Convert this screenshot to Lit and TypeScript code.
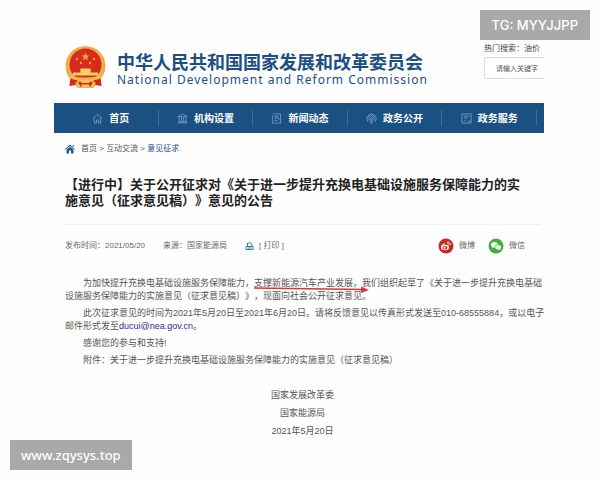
import { LitElement, html, css, svg } from "lit";
import { customElement } from "lit/decorators.js";

const NAV = [
  {
    label: "首页",
    icon: svg`<path d="M1 6 6 1.2 11 6M2.500 5v6h2.500V7.500h2V11h2.500V5" />`,
  },
  {
    label: "机构设置",
    icon: svg`<path d="M.8 4 6 1l5.200 3zM2.300 4.500v5M4.800 4.500v5M7.200 4.500v5M9.700 4.500v5M.5 10.800h11M1.500 9.500h9" />`,
  },
  {
    label: "新闻动态",
    icon: svg`<path d="M2.500 1h8v10h-9V3M3.500 3.500h5M3.500 5.500h5M3.500 8h3M8 8l1.500-2" />`,
  },
  {
    label: "政务公开",
    icon: svg`<path d="M2 9.500A5 5 0 1 1 10 9.500M3.800 8A2.800 2.800 0 1 1 8.200 8" /><path d="M5.200 5.500h1.600V11H5.200z" /><path d="M1.500 5a4.600 4.600 0 0 1 9 0" />`,
  },
  {
    label: "政务服务",
    icon: svg`<path d="M1 1h10v10H1zM3 3.500h6M3 5.500h4M3 8.500h2M8 11V9h3" />`,
  },
];

@customElement("app-root")
export class AppRoot extends LitElement {
  static styles = css`
    :host {
      display: block;
      position: relative;
      min-height: 100vh;
      box-sizing: border-box;
      padding: 0 56px 30px 54px;
      background: #fefefe;
      color: #555;
      font-family: "Liberation Sans", "Noto Sans CJK SC", sans-serif;
      font-size: 9px;
      line-height: 13px;
      text-spacing-trim: space-all;
    }
    a {
      color: inherit;
      text-decoration: none;
    }
    svg {
      display: block;
      flex: none;
    }
    .masthead {
      display: flex;
      justify-content: space-between;
      align-items: flex-start;
      padding: 43px 0 14px 10px;
    }
    .brand {
      display: flex;
      align-items: center;
      gap: 10px;
      padding-top: 3px;
      color: #1d4f82;
    }
    .brand-name {
      margin: 0;
      font: bold 18px/24px "Noto Sans CJK SC", sans-serif;
      white-space: nowrap;
    }
    .brand-en {
      margin: 0;
      font: 12px/14px "Noto Sans", sans-serif;
      letter-spacing: 1px;
      white-space: nowrap;
    }
    .search {
      width: 60px;
      font-size: 8px;
      line-height: 12px;
      white-space: nowrap;
      color: #444;
    }
    .search-box {
      display: block;
      box-sizing: border-box;
      width: 100%;
      height: 22px;
      margin-top: 2px;
      padding: 0 0 0 11px;
      border: 1px solid #ddd;
      border-right: 0;
      border-radius: 2px 0 0 2px;
      background: #fff;
      font: 7px/12px "Noto Sans CJK SC", sans-serif;
    }
    .search-box::placeholder {
      color: #555;
      opacity: 1;
    }
    .nav {
      display: grid;
      grid-template-columns: repeat(5, 1fr);
      align-items: center;
      height: 30px;
      padding: 0 7px 0 10px;
      background: #1b5083;
      color: #fff;
    }
    .nav-item {
      display: flex;
      align-items: center;
      justify-content: center;
      gap: 6px;
      height: 16px;
      border-right: 1px solid #3c6c9b;
      font-size: 10px;
      font-weight: bold;
      white-space: nowrap;
    }
    .nav-icon {
      fill: none;
      stroke: #6f9ac4;
      stroke-width: 1;
    }
    .main {
      padding: 0 4px 0 11px;
    }
    .crumbs {
      display: flex;
      align-items: center;
      gap: 6px;
      padding: 10px 0;
      font-size: 8px;
      line-height: 12px;
    }
    .current {
      color: #1d4f82;
    }
    .title {
      margin: 0;
      padding: 11px 0 16px;
      border-bottom: 1px solid #f1f1ee;
      color: #222;
      font: bold 13px/16px "Noto Sans CJK SC", sans-serif;
      white-space: nowrap;
    }
    .meta {
      display: flex;
      align-items: center;
      justify-content: space-between;
      padding: 13px 15px 23px 0;
      font-size: 8px;
      line-height: 16px;
      color: #666;
    }
    .facts,
    .shares {
      display: flex;
      gap: 18px;
    }
    .shares {
      gap: 13px;
    }
    .with-icon {
      display: flex;
      align-items: center;
      gap: 5px;
      padding: 0;
      border: 0;
      background: none;
      color: inherit;
      font: inherit;
    }
    .text {
      margin: 0 0 4px;
      text-indent: 18px;
      white-space: nowrap;
    }
    .mail {
      color: #2a2a9c;
    }
    .marked {
      position: relative;
      display: inline-block;
      text-indent: 0;
    }
    .arrow {
      position: absolute;
      left: 0;
      top: 8px;
      width: 115px;
      height: 8px;
    }
    .sign {
      margin: 19px 0 0;
      text-align: center;
      line-height: 18px;
    }
    .tag {
      position: absolute;
      background: #a9a9a9;
      color: #fff;
      font-size: 13px;
      font-weight: 500;
      line-height: 30px;
      white-space: nowrap;
    }
    .tag-top {
      top: 10px;
      right: 10px;
      padding: 0 12px;
      font-family: Inter, sans-serif;
    }
    .tag-bottom {
      left: 10px;
      bottom: 10px;
      padding: 0 11px;
      font-family: "Noto Sans", sans-serif;
    }
  `;

  render() {
    return html`
      <header class="masthead">
        <div class="brand">
          <svg width="43" height="43" viewBox="0 0 43 43" aria-hidden="true">
            <path d="M7 30 5.500 40l6-1 2 2.500h16l2-2.500 6 1L36 30z" fill="#d22a1c" />
            <circle cx="21.500" cy="20" r="20" fill="#e9b04a" />
            <circle cx="21.500" cy="18.500" r="16" fill="#d92a1e" />
            <path d="M21.500 6.500l1.100 2.900h3l-2.400 1.900.9 3-2.600-1.800-2.600 1.800.9-3-2.400-1.900h3z" fill="#f7a94a" />
            <g fill="#f3a63f">
              <circle cx="13" cy="13" r="1.200" /><circle cx="30" cy="13" r="1.200" />
              <circle cx="17" cy="17" r="1.200" /><circle cx="26" cy="17" r="1.200" />
            </g>
            <path d="M17 22.500h9l1.500 2h-1v2H34v3H9v-3h7.500v-2h-1z" fill="#f8cf63" />
            <path d="M5 27c4 4 9 4.500 16.500 4.500S34 31 38 27l-2 7c-4 2-9 2.500-14.500 2.500S11 36 7 34z" fill="#eebb50" />
            <path d="M6.500 32.500c3 1 5 1.500 7 1.500l-2 4.500-6 1zM36.500 32.500c-3 1-5 1.500-7 1.500l2 4.500 6 1z" fill="#d22a1c" />
            <path d="M15 35.500c4 1.500 9 1.500 13 0l1 4H14z" fill="#d22a1c" />
            <path d="M11 36.500l4 1.500 2 3.500h-4zM32 36.500 28 38l-2 3.500h4zM17.500 34h8v3h-8zM18 38.500h7l1 3h-9z" fill="#f3c458" />
          </svg>
          <div>
            <p class="brand-name">中华人民共和国国家发展和改革委员会</p>
            <p class="brand-en">National Development and Reform Commission</p>
          </div>
        </div>
        <div class="search">
          <label for="q">热门搜索：油价</label>
          <input class="search-box" id="q" type="text" placeholder="请输入关键字" />
        </div>
      </header>

      <nav class="nav">
        ${NAV.map(
          (item) => html`<a class="nav-item" href="#">
            <svg class="nav-icon" width="11" height="11" viewBox="0 0 12 12">${item.icon}</svg>
            ${item.label}
          </a>`
        )}
      </nav>

      <main class="main">
        <div class="crumbs">
          <svg width="10" height="10" viewBox="0 0 10 10" fill="#1d5a8c" aria-hidden="true">
            <path d="M5 .5 10 5.200l-.6.6L5 1.900.6 5.800 0 5.200zM7.600 1h1.200v2L7.600 1.900zM1.500 5.800 5 2.700l3.500 3.100v3.700H6V6.500H4v3H1.500z" />
          </svg>
          <span><a href="#">首页</a> &gt; <a href="#">互动交流</a> &gt; <a class="current" href="#">意见征求</a></span>
        </div>

        <h1 class="title">【进行中】关于公开征求对《关于进一步提升充换电基础设施服务保障能力的实<br />施意见（征求意见稿）》意见的公告</h1>

        <div class="meta">
          <div class="facts">
            <span>发布时间：2021/05/20</span>
            <span>来源：国家能源局</span>
            <button class="with-icon">
              <svg width="9" height="9" viewBox="0 0 9 9" fill="none" stroke="#3d7d96" aria-hidden="true">
                <path d="M2.500 4V1h3.700l.8.800V4M1 4.500h7v3H1zM2.500 6h4" />
              </svg>
              [ 打印 ]
            </button>
          </div>
          <div class="shares">
            <a class="with-icon" href="#">
              <svg width="16" height="16" viewBox="0 0 16 16" aria-hidden="true">
                <circle cx="8" cy="8" r="7.500" fill="#c5281c" />
                <ellipse cx="7" cy="9.500" rx="4" ry="2.700" fill="#fff" />
                <ellipse cx="7" cy="9.700" rx="2.600" ry="1.700" fill="#c5281c" />
                <circle cx="6.600" cy="9.800" r="1" fill="#fff" />
                <path d="M3.500 8.500C4 6.500 6 5.200 7 6.200M9 4.200c2-.5 3.700 1 3.200 3M9.300 5.800c1-.1 1.500.5 1.300 1.400" fill="none" stroke="#fff" stroke-width=".9" />
              </svg>
              微博
            </a>
            <a class="with-icon" href="#">
              <svg width="16" height="16" viewBox="0 0 16 16" aria-hidden="true">
                <circle cx="8" cy="8" r="7.500" fill="#41ae3c" />
                <path d="M6.500 4C4.400 4 3 5.200 3 6.800c0 .9.500 1.700 1.300 2.200L4 10.200l1.400-.7 1.300.2C6.500 7.500 8 6.200 10 6.200 9.600 4.900 8.200 4 6.500 4z" fill="#fff" />
                <path d="M10.200 6.800c-1.700 0-3 1.100-3 2.500s1.300 2.500 3 2.500l1-.1 1.200.6-.3-1c.7-.5 1.100-1.200 1.100-2 0-1.400-1.300-2.500-3-2.500z" fill="#e3f5e0" />
              </svg>
              微信
            </a>
          </div>
        </div>

        <article>
          <p class="text">为加快提升充换电基础设施服务保障能力，<span class="marked">支撑新能源汽车产业发展，<svg class="arrow" viewBox="0 0 115 8" aria-hidden="true"><path d="M0 3 109 4.500" stroke="#d8343a" stroke-width="1.500" /><path d="M107 1.500 115 5l-8 3z" fill="#d8343a" /></svg></span>我们组织起草了《关于进一步提升充换电基础<br />设施服务保障能力的实施意见（征求意见稿）》，现面向社会公开征求意见。</p>
          <p class="text">此次征求意见的时间为2021年5月20日至2021年6月20日。请将反馈意见以传真形式发送至010-68555884，或以电子<br />邮件形式发至<a class="mail" href="mailto:ducui@nea.gov.cn">ducui@nea.gov.cn</a>。</p>
          <p class="text">感谢您的参与和支持!</p>
          <p class="text">附件：关于进一步提升充换电基础设施服务保障能力的实施意见（征求意见稿）</p>
          <p class="sign">国家发展改革委<br />国家能源局<br />2021年5月20日</p>
        </article>
      </main>

      <div class="tag tag-top">TG: MYYJJPP</div>
      <div class="tag tag-bottom">www.zqysys.top</div>
    `;
  }
}
